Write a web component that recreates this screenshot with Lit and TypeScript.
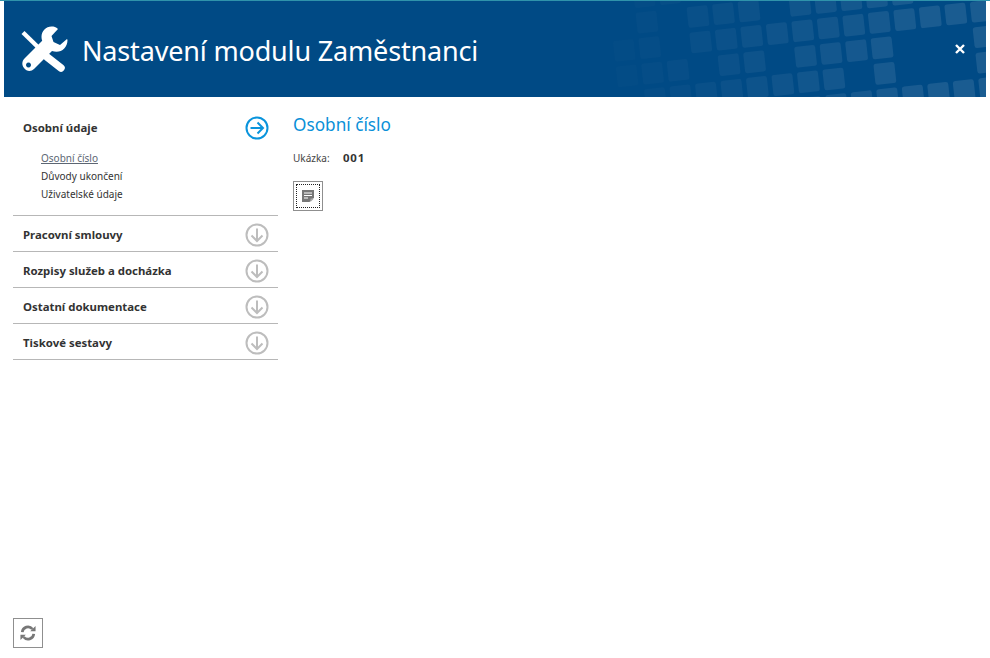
import { LitElement, html, css, svg } from "lit";
import { customElement } from "lit/decorators.js";

const LATTICE: [number, number][] = [
  [-2,-1],[-1,-1],
  [-2,0],[0,0],[1,0],[2,0],[4,0],[5,0],[6,0],[7,0],[8,0],
  [-3,1],[-2,1],[0,1],[1,1],[2,1],[3,1],[4,1],[5,1],[6,1],[7,1],[8,1],[9,1],[10,1],[11,1],
  [-3,2],[-2,2],[-1,2],[1,2],[2,2],[4,2],[5,2],[6,2],[7,2],[11,2],
  [-2,3],[-1,3],[0,3],[1,3],[2,3],[3,3],[4,3],[5,3],[7,3],[11,3],
  [4,4],[5,4],[6,4],[7,4],[8,4],[9,4],[10,4],[11,4],
];

const tiles = LATTICE.map(([i, j]) => {
  const cx = 698 + 25.5 * i + 2.8 * j;
  const cy = 16.5 - 2.8 * i + 25.5 * j;
  const op = Math.max(0.01, Math.min(0.1, 0.01 + ((cx - 620) / 300) * 0.09));
  return svg`<rect x=${cx - 10.5 - 4} y=${cy - 10.5 - 1} width="21" height="21" rx="2.5"
    fill="#fff" fill-opacity=${op} transform="rotate(-6.2 ${cx - 4} ${cy - 1})"></rect>`;
});

@customElement("app-root")
export class AppRoot extends LitElement {
  static styles = css`
    :host { display: flex; flex-direction: column; height: 658px; background: #fff; font-family: "Noto Sans", sans-serif; color: #333; overflow: hidden; }
    .topline { height: 1px; background: #2f93ab; flex: none; }
    .header { position: relative; flex: none; height: 96px; margin: 0 4px; background: #004a85; display: flex; align-items: center; overflow: hidden; }
    .pattern { position: absolute; inset: 0; width: 982px; height: 96px; }
    .logo { width: 50px; height: 50px; margin-left: 14px; flex: none; position: relative; }
    .title { position: relative; top: 1px; font: 400 27px/1 "Noto Sans", sans-serif; color: #fff; margin-left: 14px; letter-spacing: -0.17px; }
    .close { position: absolute; left: 951px; top: 43px; width: 10px; height: 10px; }
    .body { flex: 1; display: flex; min-height: 0; padding-left: 13px; }
    .side { width: 265px; flex: none; }
    .sec { border-bottom: 1px solid #b7b7b7; }
    .sec-head { height: 35px; box-sizing: border-box; padding: 3px 9px 0 10px; display: flex; align-items: center; justify-content: space-between; font: 700 11.4px "Noto Sans", sans-serif; color: #333; }
    .sec-head span { margin-bottom: 2px; }
    .first .sec-head { height: 47px; padding-top: 14px; }
    .first .sec-head span { margin-bottom: 0; }
    .links { display: flex; flex-direction: column; padding: 5px 0 12px 28px; font: 400 10px/18px "Noto Sans", sans-serif; color: #333; }
    .links span { margin: 0; }
    .links .on { color: #5c6673; text-decoration: underline; }
    .ic { width: 24px; height: 24px; flex: none; }
    .main { padding: 16px 0 0 15px; flex: 1; }
    h1 { margin: 0; font: 400 17.2px/24px "Noto Sans", sans-serif; color: #0a90d8; }
    .row { margin-top: 12px; display: flex; font: 400 10px/18px "Noto Sans", sans-serif; color: #444; }
    .row span { width: 50px; }
    .row b { color: #333; font-size: 11.4px; letter-spacing: 0.8px; }
    .btn { margin-top: 14px; width: 30px; height: 30px; box-sizing: border-box; border: 1px solid #8f8f8f; background: #fff; display: flex; align-items: center; justify-content: center; }
    .dots { width: 24px; height: 24px; box-sizing: border-box; border: 1px dotted #222; display: flex; align-items: center; justify-content: center; }
    .foot { flex: none; padding: 0 0 10px 13px; }
    .foot .btn { margin: 0; }
  `;

  private arrowDown() {
    return html`<svg class="ic" viewBox="0 0 24 24" fill="none" stroke="#bdbdbd">
      <circle cx="12" cy="12" r="10.5" stroke-width="2"></circle>
      <path d="M12 5.500V18M6.500 12.500 12 18l5.500-5.500" stroke-width="2"></path></svg>`;
  }

  render() {
    const closed = ["Pracovní smlouvy", "Rozpisy služeb a docházka", "Ostatní dokumentace", "Tiskové sestavy"];
    return html`
      <div class="topline"></div>
      <header class="header">
        <svg class="pattern" viewBox="0 0 982 96">${tiles}</svg>
        <svg class="logo" viewBox="18 23 50 50" fill="#fff">
          <path fill-rule="evenodd" d="M51.500 25.500C46 25.500 41.500 30 41.500 36C41.500 37.500 41.800 38.500 42.200 39.800L24.500 57.500C22 60 21.500 64 24 67C26.500 70.500 31 71 34 68L52 50C53.500 50.500 55 50.800 56.500 50.800C62.500 50.800 67.500 46 67.500 39L67 38L60 44L53.500 41L51.500 35L58 28C56 26 54 25.500 51.500 25.500ZM28.500 61.500a2.500 2.500 0 1 0 .01 0Z"></path>
          <path d="M21.500 33 24.500 30 47 52 44 55Z"></path>
          <path d="M47 56 61 67" stroke="#fff" stroke-width="7.500" stroke-linecap="round"></path>
        </svg>
        <div class="title">Nastavení modulu Zaměstnanci</div>
        <svg class="close" viewBox="0 0 10 10" stroke="#fff" stroke-width="2.400"><path d="M1 1 9 9M9 1 1 9"></path></svg>
      </header>
      <div class="body">
        <nav class="side">
          <section class="sec first">
            <div class="sec-head">
              <span>Osobní údaje</span>
              <svg class="ic" viewBox="0 0 24 24" fill="none" stroke="#0a94dc">
                <circle cx="12" cy="12" r="10.500" stroke-width="2"></circle>
                <path d="M5.500 12H18M12.500 6.500 18 12l-5.500 5.500" stroke-width="2"></path>
              </svg>
            </div>
            <div class="links">
              <span class="on">Osobní číslo</span>
              <span>Důvody ukončení</span>
              <span>Uživatelské údaje</span>
            </div>
          </section>
          ${closed.map((t) => html`<section class="sec"><div class="sec-head"><span>${t}</span>${this.arrowDown()}</div></section>`)}
        </nav>
        <main class="main">
          <h1>Osobní číslo</h1>
          <div class="row"><span>Ukázka:</span><b>001</b></div>
          <div class="btn"><div class="dots">
            <svg width="12" height="12" viewBox="0 0 12 12">
              <path fill="#777" d="M0 0H12V7.500L7.500 12H0Z"></path>
              <path stroke="#fff" d="M2 3H10M2 5.500H10M2 8H6"></path>
              <path fill="#aaa" d="M8.500 8.500H12L8.500 12Z"></path>
            </svg>
          </div></div>
        </main>
      </div>
      <div class="foot"><div class="btn">
        <svg width="16" height="16" viewBox="0 0 18 18" fill="none" stroke="#777" stroke-width="3">
          <path d="M2.500 8A6.500 6.500 0 0 1 14 4.500"></path>
          <path d="M15.500 10A6.500 6.500 0 0 1 4 13.500"></path>
          <path fill="#777" stroke="none" d="M11.500 7H17.500V1ZM6.500 11H.5V17Z"></path>
        </svg>
      </div></div>
    `;
  }
}
